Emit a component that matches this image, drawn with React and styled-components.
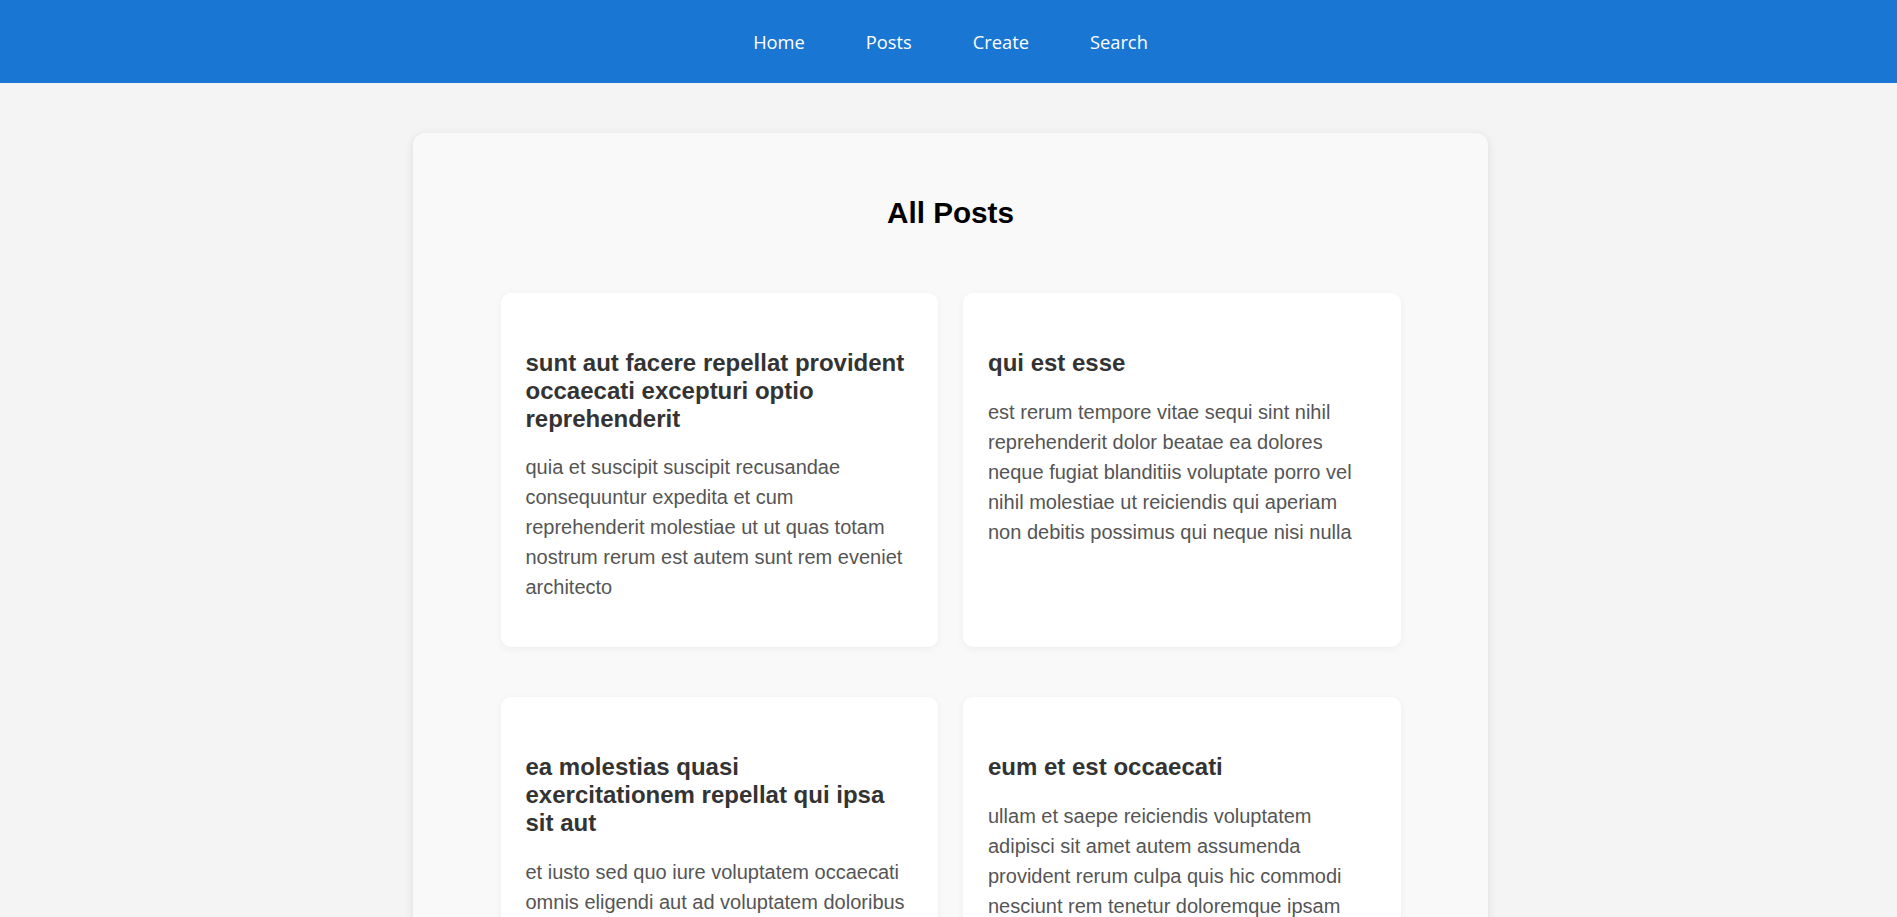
import React from "react";
import styled, { createGlobalStyle } from "styled-components";

const GlobalStyle = createGlobalStyle`
  html, body {
    margin: 0;
    padding: 0;
    background: #f4f4f4;
    font-family: "Liberation Sans", Arial, sans-serif;
  }
  * { box-sizing: border-box; }
`;

const NavBar = styled.nav`
  height: 83px;
  background: #1976d2;
  display: flex;
  align-items: center;
  justify-content: center;
  padding-left: 4px;
`;

const NavList = styled.ul`
  list-style: none;
  margin: 0;
  padding: 0;
  display: flex;
  gap: 61px;
`;

const NavLink = styled.a`
  font-family: "Open Sans", "Noto Sans", sans-serif;
  font-size: 18.3px;
  color: #ffffff;
  text-decoration: none;
  cursor: pointer;
`;

const Main = styled.main`
  padding-left: 4px;
  padding-top: 50px;
  padding-bottom: 50px;
`;

const Container = styled.section`
  width: 1075px;
  margin: 0 auto;
  background: #f9f9f9;
  border-radius: 12px;
  box-shadow: 0 2px 10px rgba(0, 0, 0, 0.1);
  padding: 42px 0 40px;
`;

const Heading = styled.h1`
  margin: 21px 0 63px;
  text-align: center;
  font-size: 29.7px;
  font-weight: 700;
  color: #000;
  line-height: normal;
`;

const Grid = styled.div`
  width: 900px;
  margin: 0 auto;
  display: grid;
  grid-template-columns: 1fr 1fr;
  column-gap: 25px;
  row-gap: 50px;
`;

const Card = styled.article`
  background: #ffffff;
  border-radius: 10px;
  box-shadow: 0 2px 8px rgba(0, 0, 0, 0.05);
  padding: 24px 25px 25px;
`;

const CardTitle = styled.h3`
  margin: 32px 0 20px;
  font-size: 24px;
  line-height: 27.8px;
  font-weight: 700;
  color: #333;
`;

const CardBody = styled.p`
  margin: 0 0 20px;
  font-size: 20px;
  line-height: 30px;
  color: #555;
`;

const posts = [
  {
    id: 1,
    title: "sunt aut facere repellat provident occaecati excepturi optio reprehenderit",
    body: "quia et suscipit suscipit recusandae consequuntur expedita et cum reprehenderit molestiae ut ut quas totam nostrum rerum est autem sunt rem eveniet architecto",
  },
  {
    id: 2,
    title: "qui est esse",
    body: "est rerum tempore vitae sequi sint nihil reprehenderit dolor beatae ea dolores neque fugiat blanditiis voluptate porro vel nihil molestiae ut reiciendis qui aperiam non debitis possimus qui neque nisi nulla",
  },
  {
    id: 3,
    title: "ea molestias quasi exercitationem repellat qui ipsa sit aut",
    body: "et iusto sed quo iure voluptatem occaecati omnis eligendi aut ad voluptatem doloribus vel accusantium quis pariatur molestiae porro eius odio et labore et velit aut",
  },
  {
    id: 4,
    title: "eum et est occaecati",
    body: "ullam et saepe reiciendis voluptatem adipisci sit amet autem assumenda provident rerum culpa quis hic commodi nesciunt rem tenetur doloremque ipsam iure quis sunt voluptatem rerum illo velit",
  },
  {
    id: 5,
    title: "nesciunt quas odio",
    body: "repudiandae veniam quaerat sunt sed alias aut fugiat sit autem sed est voluptatem omnis possimus esse voluptatibus quis est aut tenetur dolor neque",
  },
  {
    id: 6,
    title: "dolorem eum magni eos aperiam quia",
    body: "ut aspernatur corporis harum nihil quis provident sequi mollitia nobis aliquid molestiae perspiciatis et ea nemo ab reprehenderit accusantium quas voluptate dolores velit et doloremque molestiae",
  },
];

const links = ["Home", "Posts", "Create", "Search"];

export default function App() {
  return (
    <>
      <GlobalStyle />
      <NavBar>
        <NavList>
          {links.map((l) => (
            <li key={l}>
              <NavLink>{l}</NavLink>
            </li>
          ))}
        </NavList>
      </NavBar>
      <Main>
        <Container>
          <Heading>All Posts</Heading>
          <Grid>
            {posts.map((p) => (
              <Card key={p.id}>
                <CardTitle>{p.title}</CardTitle>
                <CardBody>{p.body}</CardBody>
              </Card>
            ))}
          </Grid>
        </Container>
      </Main>
    </>
  );
}
